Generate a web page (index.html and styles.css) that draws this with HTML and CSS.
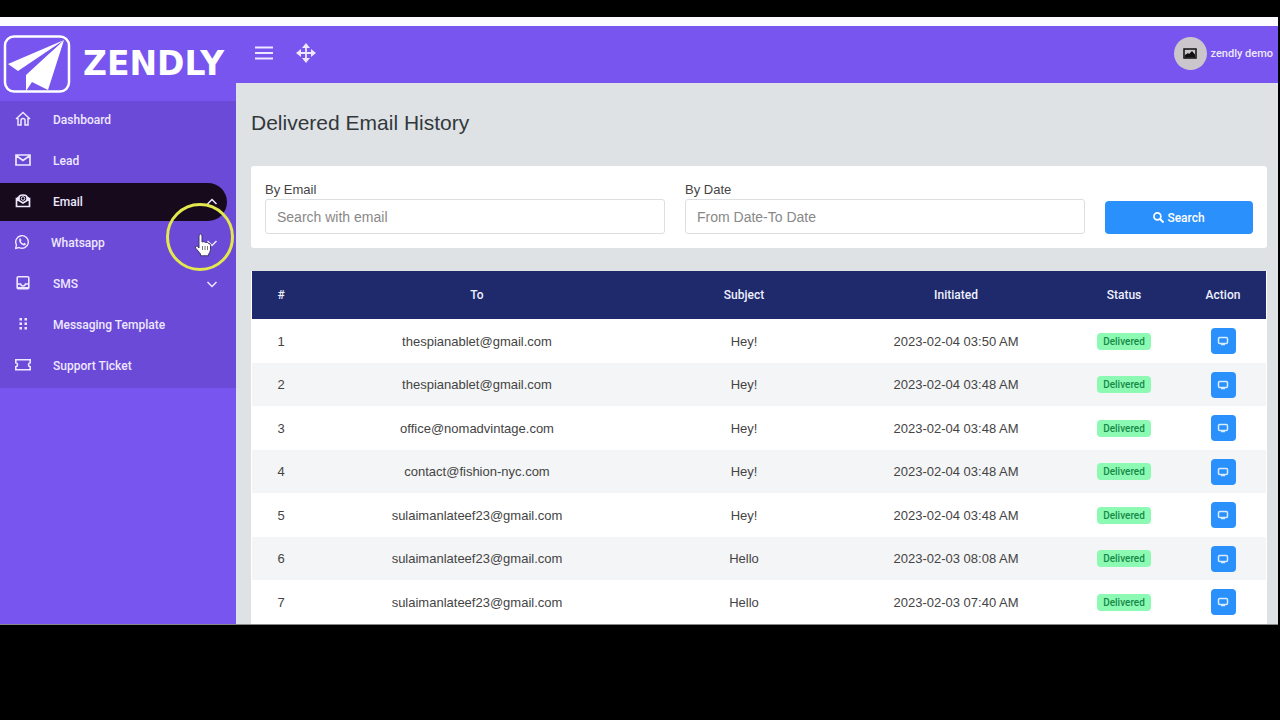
FILE: index.html
```html
<!DOCTYPE html>
<html lang="en">
<head>
    <meta charset="UTF-8">
    <meta name="viewport" content="width=device-width, initial-scale=1.0">
    <title>Delivered Email History</title>
    <link rel="stylesheet" href="styles.css">
</head>
<body>
    <!-- shared icons -->
    <svg width="0" height="0" class="sprite">
        <symbol id="icon-monitor" viewBox="0 0 12 12">
            <rect x="1.500" y="2.500" width="9" height="6" rx="1.200" fill="none" stroke="currentColor" stroke-width="1.500"/>
            <path d="M4 9.500h4" stroke="currentColor" stroke-width="1.500"/>
        </symbol>
        <symbol id="icon-chevron" viewBox="0 0 12 12">
            <path d="M1.500 4 6 8.500 10.500 4" fill="none" stroke="currentColor" stroke-width="1.500"/>
        </symbol>
    </svg>

    <div class="app">
        <aside class="sidebar">
            <a class="brand" href="#">
                <svg class="brand-logo" width="68" height="60" viewBox="0 0 68 60">
                    <rect x="2" y="2.500" width="64" height="55" rx="9" fill="none" stroke="#fff" stroke-width="2.500"/>
                    <path d="M61 6 5 30l10 7z" fill="#fff"/>
                    <path d="M61 6 23 41v16l6-9 16 8z" fill="#fff"/>
                    <path d="M58 9 18 38l5 1z" fill="#7755ee"/>
                </svg>
                <span class="brand-name">ZENDLY</span>
            </a>
            <nav class="menu">
                <a class="menu-link" href="#">
                    <svg class="menu-icon" width="16" height="16" viewBox="0 0 16 16"><path d="M1 8 8 1.500l7 6.500M3 7v7h3V9.500a2 2 0 0 1 4 0V14h3V7" fill="none" stroke="currentColor" stroke-width="1.500"/></svg>
                    <span>Dashboard</span>
                </a>
                <a class="menu-link" href="#">
                    <svg class="menu-icon" width="16" height="16" viewBox="0 0 16 16"><path d="M1 3h14v10H1zM1 3.500l7 5 7-5" fill="none" stroke="currentColor" stroke-width="1.700"/></svg>
                    <span>Lead</span>
                </a>
                <a class="menu-link active" href="#">
                    <svg class="menu-icon" width="16" height="16" viewBox="0 0 16 16"><path d="M1.500 6v7.500h13V6L8 10zM1.500 6 4 4M14.500 6 12 4M4 7V4.500Q4 2 8 2t4 2.500V7" fill="none" stroke="currentColor" stroke-width="1.700"/><circle cx="8" cy="5.500" r="1.800" fill="none" stroke="currentColor"/></svg>
                    <span>Email</span>
                    <svg class="menu-arrow up" width="12" height="12"><use href="#icon-chevron"/></svg>
                </a>
                <a class="menu-link" href="#">
                    <svg class="menu-icon" width="14" height="16" viewBox="0 0 14 16"><path d="M.5 14.500 1.500 11A6.300 6.300 0 1 1 4 13.500z" fill="none" stroke="currentColor" stroke-width="1.400"/><path d="M4.200 5.200q.8-1.400 1.600-.5l.7 1.500-.7 1Q6.600 9 8.200 9.700l1-.9 1.700.9q.2 1.700-1.900 1.800Q5.800 11.100 4.200 7.600z" fill="currentColor"/></svg>
                    <span>Whatsapp</span>
                    <svg class="menu-arrow" width="12" height="12"><use href="#icon-chevron"/></svg>
                </a>
                <a class="menu-link" href="#">
                    <svg class="menu-icon" width="16" height="16" viewBox="0 0 16 16"><rect x="2.200" y="1.700" width="11.600" height="12" rx="1" fill="none" stroke="currentColor" stroke-width="1.600"/><path d="M2 9h3.500q.5 2 2.500 2t2.500-2H14M3 12.800h10" fill="none" stroke="currentColor" stroke-width="1.500"/></svg>
                    <span>SMS</span>
                    <svg class="menu-arrow" width="12" height="12"><use href="#icon-chevron"/></svg>
                </a>
                <a class="menu-link" href="#">
                    <svg class="menu-icon" width="16" height="16" viewBox="0 0 16 16" fill="currentColor"><path d="M4.500 2H7v2.500H4.500zM9.500 2H12v2.500H9.500zM4.500 6.500H7V9H4.500zM9.500 6.500H12V9H9.500zM4.500 11H7v2.500H4.500zM9.500 11H12v2.500H9.500z"/></svg>
                    <span>Messaging Template</span>
                </a>
                <a class="menu-link" href="#">
                    <svg class="menu-icon" width="16" height="16" viewBox="0 0 16 16"><path d="M.8 2.800h14.400v3Q13.500 6 13.500 7.700t1.700 2v3H.8v-3q1.700-.2 1.700-2T.8 5.800z" fill="none" stroke="currentColor" stroke-width="1.600"/></svg>
                    <span>Support Ticket</span>
                </a>
            </nav>

            <!-- pointer highlight -->
            <div class="pointer">
                <svg width="18" height="24" viewBox="0 0 18 24"><path d="M5 14V3q0-2 1.500-2T8 3v6l2-.5 1.500 1 2-.2 1 1.200q2-.2 2 1.800v4q0 3-2 5v1.500H6.500V21L2 15.500q-1.500-2 0-2.500 1-.2 3 2z" fill="#fff" stroke="#40366a" stroke-width="1"/><path d="M8.500 13v4M11 13v4M13.500 13v4" stroke="#777"/></svg>
            </div>
        </aside>

        <div class="page">
            <header class="topbar">
                <button class="icon-button" type="button" aria-label="Toggle menu">
                    <svg width="18" height="14" viewBox="0 0 18 14"><path d="M0 1.500h18M0 7h18M0 12.500h18" stroke="currentColor" stroke-width="1.800"/></svg>
                </button>
                <button class="icon-button" type="button" aria-label="Full screen">
                    <svg width="20" height="20" viewBox="0 0 20 20"><path d="M10 3v14M3 10h14" stroke="currentColor" stroke-width="1.800"/><path d="M10 0l4 5H6zM10 20l4-5H6zM0 10l5-4v8zM20 10l-5-4v8z" fill="currentColor"/></svg>
                </button>
                <a class="user" href="#">
                    <span class="avatar">
                        <svg width="14" height="11" viewBox="0 0 14 11"><rect x="1" y="1" width="12" height="9" fill="none" stroke="#111" stroke-width="1.500"/><path d="M2 9.500V7l3-2 1 1 3-3 3 3.500v3z" fill="#111"/></svg>
                    </span>
                    <span>zendly demo</span>
                </a>
            </header>

            <main class="content">
                <h1 class="title">Delivered Email History</h1>

                <form class="search-card">
                    <div class="field">
                        <label for="email">By Email</label>
                        <input type="text" id="email" placeholder="Search with email">
                    </div>
                    <div class="field">
                        <label for="date">By Date</label>
                        <input type="text" id="date" placeholder="From Date-To Date">
                    </div>
                    <button class="search-button" type="button">
                        <svg width="11" height="11" viewBox="0 0 12 12"><circle cx="4.800" cy="4.800" r="3.800" fill="none" stroke="currentColor" stroke-width="1.800"/><path d="m7.500 7.500 4 4" stroke="currentColor" stroke-width="2.200"/></svg>
                        Search
                    </button>
                </form>

                <div class="table-card">
                    <table class="history">
                        <colgroup>
                            <col class="col-id">
                            <col class="col-to">
                            <col class="col-subject">
                            <col class="col-initiated">
                            <col class="col-status">
                            <col class="col-action">
                        </colgroup>
                        <thead>
                            <tr><th>#</th><th>To</th><th>Subject</th><th>Initiated</th><th>Status</th><th>Action</th></tr>
                        </thead>
                        <tbody>
                            <tr>
                                <td>1</td><td>thespianablet@gmail.com</td><td>Hey!</td><td>2023-02-04 03:50 AM</td>
                                <td><span class="badge">Delivered</span></td>
                                <td><button class="view-button" type="button" aria-label="View"><svg width="12" height="12"><use href="#icon-monitor"/></svg></button></td>
                            </tr>
                            <tr>
                                <td>2</td><td>thespianablet@gmail.com</td><td>Hey!</td><td>2023-02-04 03:48 AM</td>
                                <td><span class="badge">Delivered</span></td>
                                <td><button class="view-button" type="button" aria-label="View"><svg width="12" height="12"><use href="#icon-monitor"/></svg></button></td>
                            </tr>
                            <tr>
                                <td>3</td><td>office@nomadvintage.com</td><td>Hey!</td><td>2023-02-04 03:48 AM</td>
                                <td><span class="badge">Delivered</span></td>
                                <td><button class="view-button" type="button" aria-label="View"><svg width="12" height="12"><use href="#icon-monitor"/></svg></button></td>
                            </tr>
                            <tr>
                                <td>4</td><td>contact@fishion-nyc.com</td><td>Hey!</td><td>2023-02-04 03:48 AM</td>
                                <td><span class="badge">Delivered</span></td>
                                <td><button class="view-button" type="button" aria-label="View"><svg width="12" height="12"><use href="#icon-monitor"/></svg></button></td>
                            </tr>
                            <tr>
                                <td>5</td><td>sulaimanlateef23@gmail.com</td><td>Hey!</td><td>2023-02-04 03:48 AM</td>
                                <td><span class="badge">Delivered</span></td>
                                <td><button class="view-button" type="button" aria-label="View"><svg width="12" height="12"><use href="#icon-monitor"/></svg></button></td>
                            </tr>
                            <tr>
                                <td>6</td><td>sulaimanlateef23@gmail.com</td><td>Hello</td><td>2023-02-03 08:08 AM</td>
                                <td><span class="badge">Delivered</span></td>
                                <td><button class="view-button" type="button" aria-label="View"><svg width="12" height="12"><use href="#icon-monitor"/></svg></button></td>
                            </tr>
                            <tr>
                                <td>7</td><td>sulaimanlateef23@gmail.com</td><td>Hello</td><td>2023-02-03 07:40 AM</td>
                                <td><span class="badge">Delivered</span></td>
                                <td><button class="view-button" type="button" aria-label="View"><svg width="12" height="12"><use href="#icon-monitor"/></svg></button></td>
                            </tr>
                        </tbody>
                    </table>
                </div>
            </main>
        </div>
    </div>
</body>
</html>
```
FILE: styles.css
```css
* {
    box-sizing: border-box;
}
body {
    margin: 0;
    padding: 17px 2px 0 0;
    background: #000;
    color: #444;
    font-family: "Liberation Sans", Arial, sans-serif;
    font-size: 13px;
}
a {
    color: inherit;
    text-decoration: none;
}
.sprite {
    position: absolute;
}
.app {
    display: flex;
    border-top: 9px solid #fcfaff;
    border-bottom: 1px solid #888;
    background: #dee2e5;
}

/* sidebar */
.sidebar {
    position: relative;
    flex: none;
    width: 236px;
    background: #7755ee;
    color: #eee8ff;
    font-family: Roboto, sans-serif;
    font-size: 12px;
    font-weight: 500;
}
.brand {
    display: flex;
    align-items: center;
    gap: 12px;
    height: 75px;
    padding-left: 3px;
    color: #fff;
}
.brand-name {
    font-family: "DejaVu Sans", sans-serif;
    font-size: 33px;
    font-weight: bold;
}
.menu {
    display: flex;
    flex-direction: column;
    gap: 3px;
    padding-bottom: 3px;
    background: #6b4ad8;
}
.menu-link {
    display: flex;
    align-items: center;
    height: 38px;
    margin-right: 9px;
    padding: 0 9px 0 15px;
    border-radius: 0 19px 19px 0;
}
.menu-link.active {
    background: #160a1c;
}
.menu-icon {
    margin: 0 22px 2px 0;
}
.menu-arrow {
    margin-left: auto;
}
.menu-arrow.up {
    transform: rotate(180deg);
}
.pointer {
    position: absolute;
    top: 177px;
    left: 166px;
    display: flex;
    align-items: center;
    justify-content: center;
    width: 68px;
    height: 68px;
    padding: 16px 0 0 6px;
    border: 3px solid #e2e84e;
    border-radius: 50%;
}

/* top bar */
.page {
    flex: 1;
    min-width: 0;
}
.topbar {
    display: flex;
    align-items: center;
    gap: 23px;
    height: 57px;
    padding: 0 5px 3px 19px;
    background: #7755ee;
    color: #eee8ff;
}
.icon-button {
    display: flex;
    padding: 0;
    border: 0;
    background: none;
    color: inherit;
    cursor: pointer;
}
.user {
    display: flex;
    align-items: center;
    gap: 4px;
    margin-left: auto;
    font-family: Roboto, sans-serif;
    font-size: 11px;
    font-weight: 500;
}
.avatar {
    display: flex;
    align-items: center;
    justify-content: center;
    width: 33px;
    height: 33px;
    border-radius: 50%;
    background: #cbc6cb;
}

/* content */
.content {
    padding: 27px 11px 0 15px;
}
.title {
    margin: 0 0 30px;
    color: #33383c;
    font-size: 21px;
    font-weight: normal;
    line-height: 26px;
}
.search-card {
    display: grid;
    grid-template-columns: 400fr 400fr 148fr;
    align-items: end;
    gap: 20px;
    margin-bottom: 23px;
    padding: 14px;
    border-radius: 3px;
    background: #fff;
}
.field label {
    display: block;
    line-height: 19px;
}
.field input {
    display: block;
    width: 100%;
    height: 35px;
    padding: 0 11px;
    border: 1px solid #dcdfe2;
    border-radius: 3px;
    font-family: inherit;
    font-size: 14px;
}
.field input::placeholder {
    color: #888;
}
.search-button {
    display: flex;
    align-items: center;
    justify-content: center;
    gap: 3px;
    height: 33px;
    border: 0;
    border-radius: 4px;
    background: #2a90fc;
    color: #fff;
    font-family: Roboto, sans-serif;
    font-size: 12px;
    font-weight: 500;
    cursor: pointer;
}
.table-card {
    padding: 0 1px;
    background: #fff;
}
.history {
    width: 100%;
    border-collapse: collapse;
    table-layout: fixed;
    text-align: center;
}
.col-id {
    width: 58px;
}
.col-subject {
    width: 200px;
}
.col-initiated {
    width: 224px;
}
.col-status {
    width: 112px;
}
.col-action {
    width: 86px;
}
.history th {
    height: 48px;
    padding: 0;
    background: #1f2a6c;
    color: #eef0ff;
    font-family: Roboto, sans-serif;
    font-size: 12px;
    font-weight: 500;
}
.history td {
    height: 44px;
    padding: 0;
}
.history tbody tr:nth-child(even) td {
    height: 43px;
    background: #f4f5f6;
}
.badge {
    display: inline-block;
    padding: 0 6px;
    border-radius: 4px;
    background: #8dfab4;
    color: #148a48;
    font-family: Roboto, sans-serif;
    font-size: 10px;
    font-weight: 500;
    line-height: 17px;
}
.view-button {
    display: inline-flex;
    align-items: center;
    justify-content: center;
    width: 25px;
    height: 26px;
    padding: 0;
    border: 0;
    border-radius: 4px;
    background: #2a90fc;
    color: #d8ecff;
    vertical-align: middle;
    cursor: pointer;
}
```
